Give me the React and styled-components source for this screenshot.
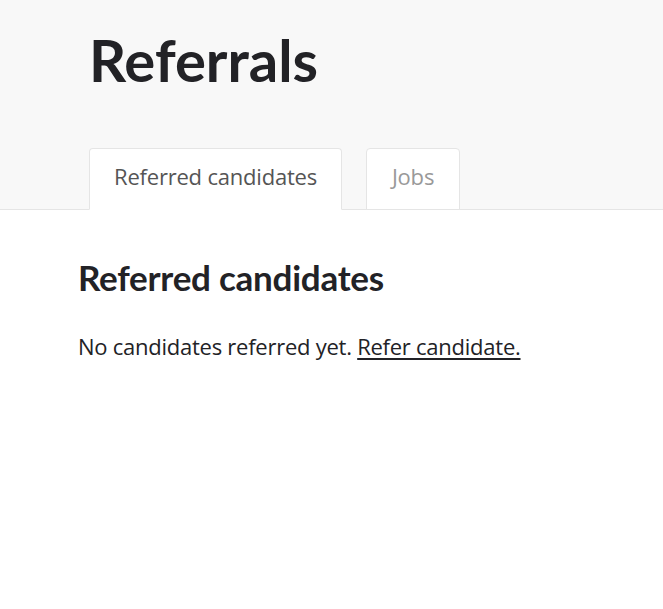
import React from 'react'
import styled, { createGlobalStyle } from 'styled-components'

const GlobalStyle = createGlobalStyle`
  body {
    margin: 0;
    background: #ffffff;
    font-family: "Open Sans", "Noto Sans", sans-serif;
    color: #222226;
  }
`

const Header = styled.header`
  background-color: #f8f8f8;
  border-bottom: 1px solid #e5e5e5;
  padding: 18px 0 0 89px;
`

const Title = styled.h1`
  margin: 0;
  font-family: Lato, "Open Sans", sans-serif;
  font-size: 58px;
  line-height: 84px;
  font-weight: 700;
  color: #222226;
`

const Tabs = styled.nav`
  display: flex;
  gap: 24px;
  margin-top: 46px;
  margin-bottom: -1px;
`

const Tab = styled.button`
  height: 62px;
  min-width: 94px;
  padding: 0 24px 6px;
  border: 1px solid #e5e5e5;
  border-bottom: 1px solid ${({ active }) => (active ? '#ffffff' : '#e5e5e5')};
  border-radius: 4px 4px 0 0;
  background: #ffffff;
  font-family: inherit;
  font-size: 22px;
  letter-spacing: -0.2px;
  color: ${({ active }) => (active ? '#555555' : '#999999')};
  cursor: pointer;
`

const Content = styled.main`
  padding: 47px 0 0 78px;
`

const Heading = styled.h2`
  margin: 0;
  font-family: Lato, "Open Sans", sans-serif;
  font-size: 35px;
  line-height: 40px;
  font-weight: 700;
  letter-spacing: -0.25px;
`

const Message = styled.p`
  margin: 34px 0 0;
  font-size: 22px;
  line-height: 30px;
  letter-spacing: -0.25px;
`

const Link = styled.a`
  color: inherit;
  text-decoration: underline;
  text-decoration-thickness: 2px;
  text-underline-offset: 3px;
`

const tabs = [
  { label: 'Referred candidates', active: true },
  { label: 'Jobs', active: false }
]

const App = () => {
  return (
    <>
      <GlobalStyle />
      <Header>
        <Title>Referrals</Title>
        <Tabs>
          {tabs.map((t) => (
            <Tab key={t.label} active={t.active}>{t.label}</Tab>
          ))}
        </Tabs>
      </Header>
      <Content>
        <Heading>Referred candidates</Heading>
        <Message>
          No candidates referred yet. <Link href="#">Refer candidate.</Link>
        </Message>
      </Content>
    </>
  )
}

export default App
